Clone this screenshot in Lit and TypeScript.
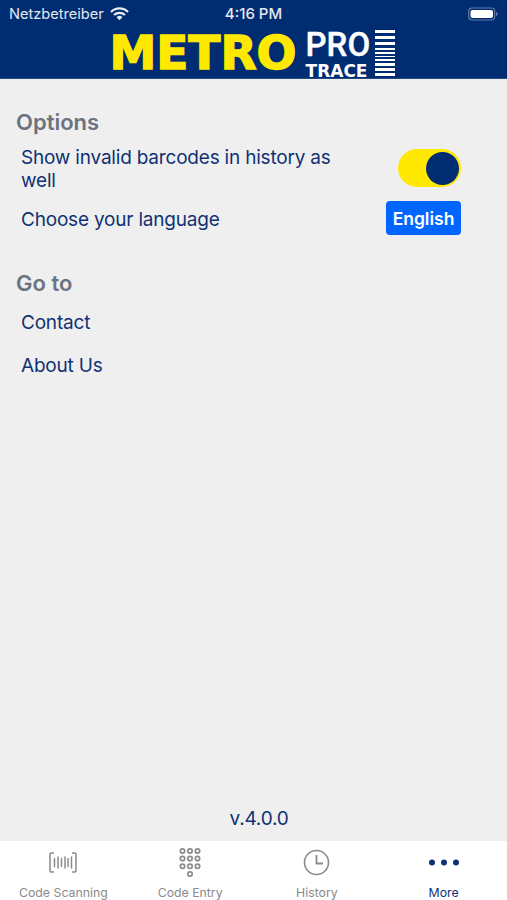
import { LitElement, html, svg, css } from "lit";
import { customElement } from "lit/decorators.js";

@customElement("app-root")
export class AppRoot extends LitElement {
  static styles = css`
    :host { display: flex; flex-direction: column; width: 507px; height: 900px; overflow: hidden; background: #efefef; font-family: Inter, "Noto Sans", sans-serif; color: #0f3274; }
    * { box-sizing: border-box; }
    .top { background: #002d72; height: 79px; flex: none; border-bottom: 1px solid #1f4a85; display: flex; flex-direction: column; }
    .status { height: 28px; flex: none; display: grid; grid-template-columns: 1fr auto 1fr; align-items: center; padding: 0 9px 1px; color: #e4e8f0; font-size: 14.6px; }
    .carrier { display: flex; align-items: center; gap: 6px; }
    .time { font-weight: 500; font-size: 15px; }
    .battery { justify-self: end; display: flex; align-items: center; gap: 1px; }
    .logo { display: flex; justify-content: center; align-items: flex-start; height: 50px; padding-right: 3px; }
    .metro { font-family: "DejaVu Sans", sans-serif; font-weight: 700; font-size: 47px; line-height: 34px; height: 34px; margin-top: 8px; color: #ffe900; white-space: nowrap; -webkit-text-stroke: 1.4px #ffe900; }
    .pt { display: flex; flex-direction: column; margin-left: 9px; color: #fff; width: 64px; }
    .pro { font-family: Roboto, sans-serif; font-weight: 500; font-size: 33px; line-height: 26px; height: 26px; margin-top: 4px; -webkit-text-stroke: .4px #fff; }
    .trace { font-family: "DejaVu Sans", sans-serif; font-weight: 700; font-size: 17px; line-height: 14px; margin-top: 6px; white-space: nowrap; }
    .bars { margin: 2px 0 0 5px; display: flex; flex-direction: column; width: 20px; }
    .bars i { display: block; background: #fff; width: 100%; }
    main { flex: 1; padding: 29px 46px 0 16px; display: flex; flex-direction: column; }
    h2 { margin: 0; font-size: 22px; line-height: 28px; font-weight: 600; color: #6b7280; }
    .options { display: flex; flex-direction: column; padding-left: 5px; margin-top: 10px; }
    .row { display: flex; justify-content: space-between; align-items: center; font-size: 19px; letter-spacing: -.2px; line-height: 23px; }
    .row span { width: 330px; }
    .toggle { width: 63px; height: 38px; background: #ffe900; border-radius: 19px; display: flex; justify-content: flex-end; align-items: center; padding-right: 2px; margin-top: -2px; }
    .toggle i { display: block; width: 33px; height: 33px; border-radius: 50%; background: #002d72; }
    .lang { margin-top: 9px; }
    .btn { background: #0066ff; color: #fff; font-size: 17.5px; font-weight: 600; letter-spacing: 0; width: 75px; height: 34px; border-radius: 4px; display: flex; align-items: center; justify-content: center; margin-bottom: 2px; }
    .goto { margin-top: 32px; }
    .links { display: flex; flex-direction: column; gap: 20px; padding-left: 5px; margin-top: 14px; font-size: 19px; letter-spacing: -.2px; line-height: 23px; }
    .version { margin-top: auto; margin-left: -16px; margin-right: -46px; padding: 0 0 10px 11px; text-align: center; font-size: 19px; letter-spacing: -.2px; line-height: 24px; }
    nav { height: 59px; flex: none; background: #fff; display: grid; grid-template-columns: repeat(4, 1fr); }
    .tab { display: flex; flex-direction: column; align-items: center; color: #8a8a8a; font-size: 12.3px; }
    .tab svg { display: block; height: 38px; width: 40px; margin-top: 4px; }
    .tab b { font-weight: 400; line-height: 16px; margin-top: 2px; }
    .tab.on { color: #0f3274; }
  `;

  render() {
    const dots: [number, number][] = [];
    for (const y of [6, 13.6, 21.3]) for (const x of [12.5, 20, 27.5]) dots.push([x, y]);
    dots.push([20, 29]);
    return html`
      <div class="top">
        <div class="status">
          <div class="carrier">Netzbetreiber
            <svg width="19" height="14" viewBox="0 0 19 14"><path d="M1 5 a12 12 0 0 1 17 0 M4 8 a8 8 0 0 1 11 0" fill="none" stroke="#e8ecf3" stroke-width="2.2"/><path d="M6.6 10.2 a4.2 4.2 0 0 1 5.8 0 L9.5 13.2 z" fill="#e8ecf3"/></svg>
          </div>
          <div class="time">4:16 PM</div>
          <div class="battery">
            <svg width="30" height="14" viewBox="0 0 30 14"><rect x=".7" y="1" width="26" height="12" rx="3.5" fill="none" stroke="#5f7aa5" stroke-width="1.2"/><rect x="2.5" y="3" width="22.5" height="8" rx="2" fill="#fff"/><path d="M28 5v4c1-.3 1.6-1.1 1.6-2S29 5.300 28 5z" fill="#5f7aa5"/></svg>
          </div>
        </div>
        <div class="logo">
          <div class="metro">METRO</div>
          <div class="pt"><div class="pro">PRO</div><div class="trace">TRACE</div></div>
          <div class="bars">
            ${[[3,3],[3,3],[3,3],[2,2],[2,2],[1,2],[2,2],[3,2],[3,2],[3,0]].map(([h, g]) => html`<i style="height:${h}px;margin-bottom:${g}px"></i>`)}
          </div>
        </div>
      </div>
      <main>
        <h2>Options</h2>
        <div class="options">
          <div class="row"><span>Show invalid barcodes in history as well</span><div class="toggle"><i></i></div></div>
          <div class="row lang"><span>Choose your language</span><div class="btn">English</div></div>
        </div>
        <h2 class="goto">Go to</h2>
        <div class="links"><div>Contact</div><div>About Us</div></div>
        <div class="version">v.4.0.0</div>
      </main>
      <nav>
        <div class="tab">
          <svg viewBox="0 0 40 38" fill="none" stroke="#8a8a8a"><path d="M11 8H8.500Q7 8 7 9.500V25.500Q7 27 8.500 27H11M29 8H31.500Q33 8 33 9.500V25.500Q33 27 31.500 27H29" stroke-width="1.500"/><path d="M11.500 13.500v8M15 12v11M18.500 13.500v8M22 12v11M25 13.500v8M28.500 12v11" stroke-width="1.500" stroke-linecap="round"/></svg>
          <b>Code Scanning</b>
        </div>
        <div class="tab">
          <svg viewBox="0 0 40 38" fill="none" stroke="#8a8a8a" stroke-width="1.700">${dots.map(([x, y]) => svg`<circle cx=${x} cy=${y} r="2.200"></circle>`)}</svg>
          <b>Code Entry</b>
        </div>
        <div class="tab">
          <svg viewBox="0 0 40 38" fill="none" stroke="#8a8a8a" stroke-width="1.600"><circle cx="19.500" cy="17.500" r="12"></circle><path d="M19.500 10V18.500H26" stroke-width="1.800"/></svg>
          <b>History</b>
        </div>
        <div class="tab on">
          <svg viewBox="0 0 40 38" fill="#0f3274"><circle cx="8" cy="17.500" r="3"></circle><circle cx="20" cy="17.500" r="3"></circle><circle cx="32" cy="17.500" r="3"></circle></svg>
          <b>More</b>
        </div>
      </nav>
    `;
  }
}
